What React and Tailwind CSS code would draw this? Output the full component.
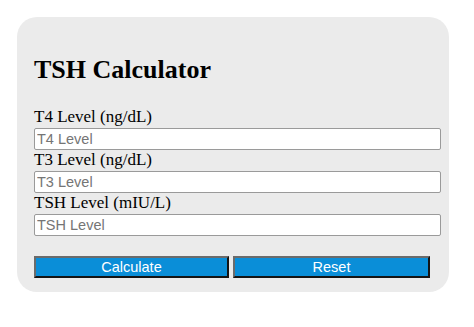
import React from 'react';

const fields = [
  { label: 'T4 Level (ng/dL)', placeholder: 'T4 Level' },
  { label: 'T3 Level (ng/dL)', placeholder: 'T3 Level' },
  { label: 'TSH Level (mIU/L)', placeholder: 'TSH Level' },
];

const App = () => {
  return (
    <div className="min-h-screen bg-white pt-[17px] pl-[17px]">
      {/* Calculator card */}
      <div className="w-[432px] h-[275px] rounded-[20px] bg-[#ebebeb] pt-[38px] pl-[17px]">
        <h2 className="font-['Liberation_Serif',serif] font-bold text-[26px] leading-[30px] text-black">
          TSH Calculator
        </h2>

        <div className="mt-[22px]">
          {fields.map((f) => (
            <div key={f.label}>
              <label className="block h-[20px] font-['Liberation_Serif',serif] text-[17px] leading-[20px] text-black">
                {f.label}
              </label>
              <input
                type="text"
                placeholder={f.placeholder}
                className="block mt-[1px] w-[407px] h-[22px] bg-white border border-[#9a9a9a] rounded-[2px] px-[2px] font-['Liberation_Sans',sans-serif] text-[14.5px] text-black placeholder:text-[#757575] outline-none"
              />
            </div>
          ))}
        </div>

        {/* Buttons */}
        <div className="flex gap-[4px] mt-[20px]">
          <button className="w-[195px] h-[22px] bg-[#0a8ed8] border-2 border-t-[#6b6b6b] border-l-[#6b6b6b] border-b-[#141414] border-r-[#141414] font-['Liberation_Sans',sans-serif] text-[14.5px] leading-none text-white">
            Calculate
          </button>
          <button className="w-[197px] h-[22px] bg-[#0a8ed8] border-2 border-t-[#6b6b6b] border-l-[#6b6b6b] border-b-[#141414] border-r-[#141414] font-['Liberation_Sans',sans-serif] text-[14.5px] leading-none text-white">
            Reset
          </button>
        </div>
      </div>
    </div>
  );
};

export default App;
